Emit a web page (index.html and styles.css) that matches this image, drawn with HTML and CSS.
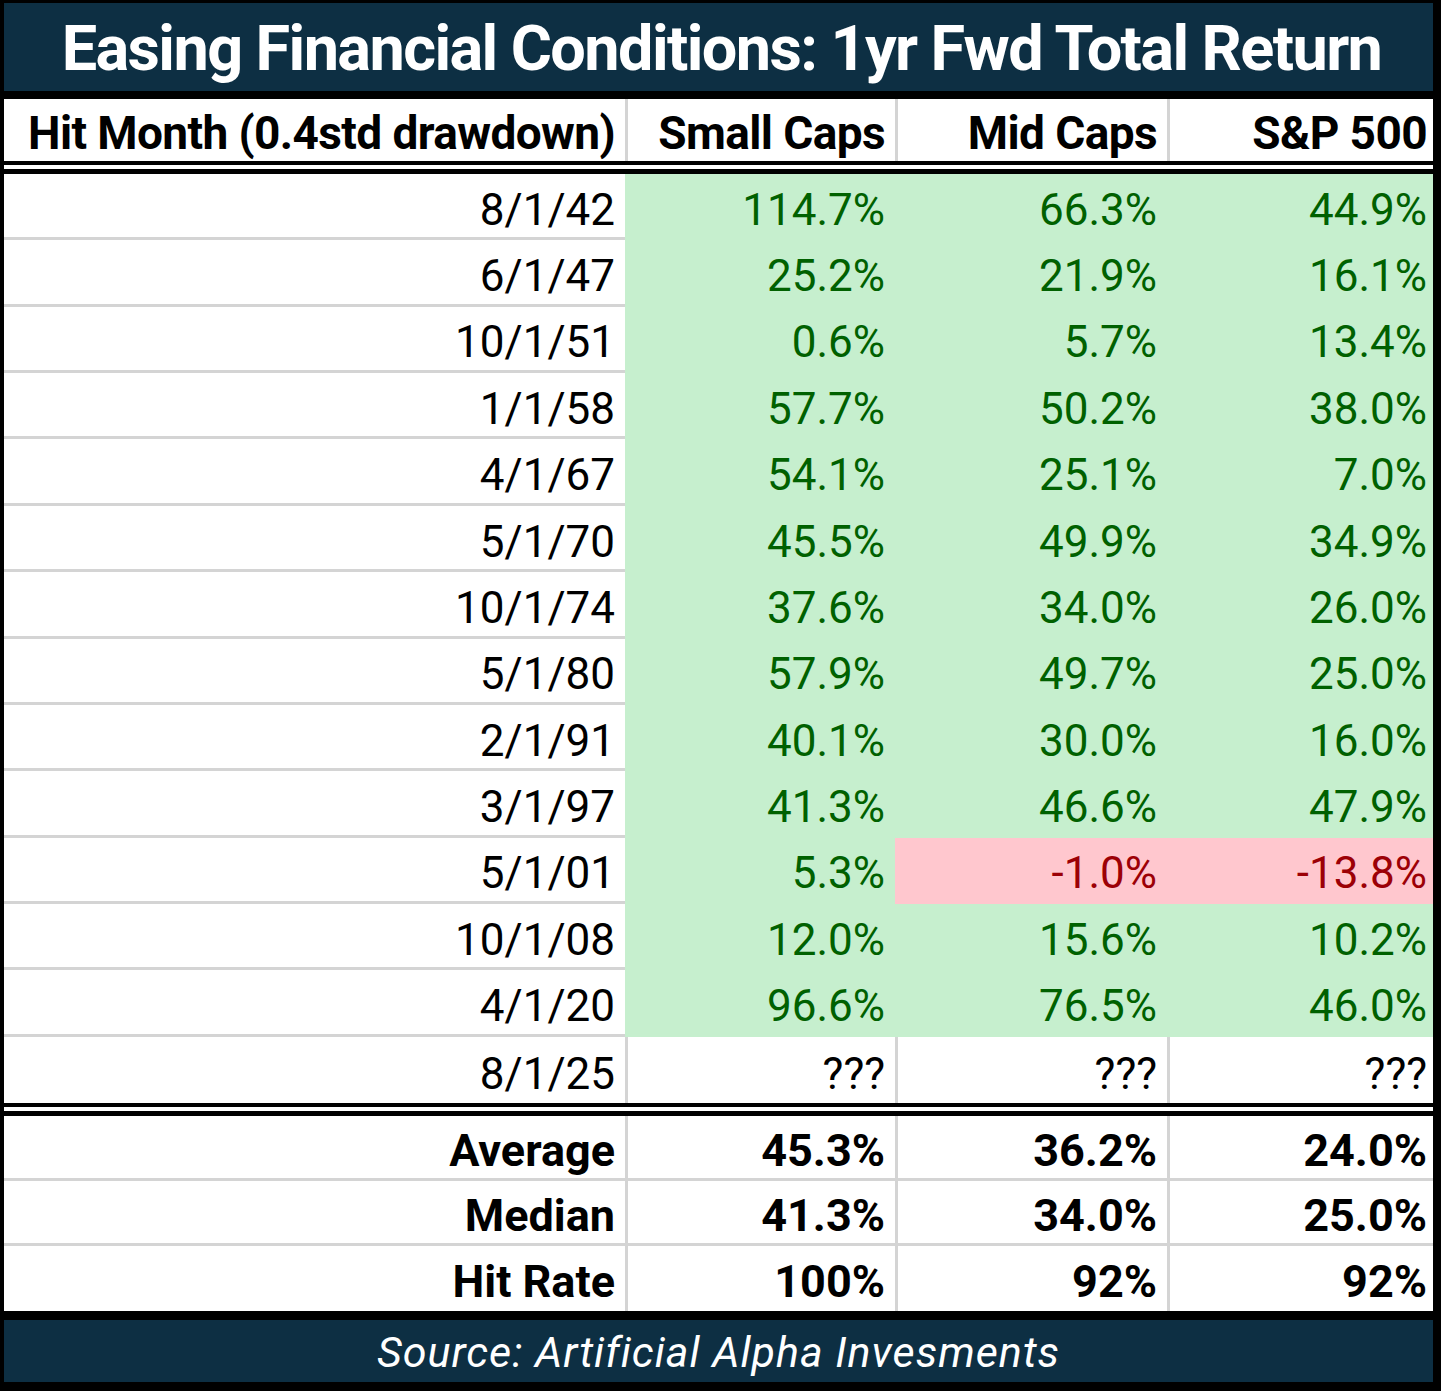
FILE: index.html
```html
<!DOCTYPE html>
<html lang="en">
<head>
<meta charset="utf-8">
<title>Easing Financial Conditions: 1yr Fwd Total Return</title>
<link rel="stylesheet" href="styles.css">
</head>
<body>
<div class="frame">
  <header class="title">Easing Financial Conditions: 1yr Fwd Total Return</header>

  <div class="row head">
    <div class="c c1">Hit Month (0.4std drawdown)</div>
    <div class="c c2">Small Caps</div>
    <div class="c c3">Mid Caps</div>
    <div class="c c4">S&amp;P 500</div>
  </div>
  <div class="dbl"></div>

  <div class="row data"><div class="c c1">8/1/42</div><div class="c c2 g">114.7%</div><div class="c c3 g">66.3%</div><div class="c c4 g">44.9%</div></div>
  <div class="row data"><div class="c c1">6/1/47</div><div class="c c2 g">25.2%</div><div class="c c3 g">21.9%</div><div class="c c4 g">16.1%</div></div>
  <div class="row data"><div class="c c1">10/1/51</div><div class="c c2 g">0.6%</div><div class="c c3 g">5.7%</div><div class="c c4 g">13.4%</div></div>
  <div class="row data"><div class="c c1">1/1/58</div><div class="c c2 g">57.7%</div><div class="c c3 g">50.2%</div><div class="c c4 g">38.0%</div></div>
  <div class="row data"><div class="c c1">4/1/67</div><div class="c c2 g">54.1%</div><div class="c c3 g">25.1%</div><div class="c c4 g">7.0%</div></div>
  <div class="row data"><div class="c c1">5/1/70</div><div class="c c2 g">45.5%</div><div class="c c3 g">49.9%</div><div class="c c4 g">34.9%</div></div>
  <div class="row data"><div class="c c1">10/1/74</div><div class="c c2 g">37.6%</div><div class="c c3 g">34.0%</div><div class="c c4 g">26.0%</div></div>
  <div class="row data"><div class="c c1">5/1/80</div><div class="c c2 g">57.9%</div><div class="c c3 g">49.7%</div><div class="c c4 g">25.0%</div></div>
  <div class="row data"><div class="c c1">2/1/91</div><div class="c c2 g">40.1%</div><div class="c c3 g">30.0%</div><div class="c c4 g">16.0%</div></div>
  <div class="row data"><div class="c c1">3/1/97</div><div class="c c2 g">41.3%</div><div class="c c3 g">46.6%</div><div class="c c4 g">47.9%</div></div>
  <div class="row data"><div class="c c1">5/1/01</div><div class="c c2 g">5.3%</div><div class="c c3 r">-1.0%</div><div class="c c4 r">-13.8%</div></div>
  <div class="row data"><div class="c c1">10/1/08</div><div class="c c2 g">12.0%</div><div class="c c3 g">15.6%</div><div class="c c4 g">10.2%</div></div>
  <div class="row data"><div class="c c1">4/1/20</div><div class="c c2 g">96.6%</div><div class="c c3 g">76.5%</div><div class="c c4 g">46.0%</div></div>
  <div class="row data last"><div class="c c1">8/1/25</div><div class="c c2">???</div><div class="c c3">???</div><div class="c c4">???</div></div>

  <div class="dbl dbl-b"></div>

  <div class="row sum"><div class="c c1">Average</div><div class="c c2">45.3%</div><div class="c c3">36.2%</div><div class="c c4">24.0%</div></div>
  <div class="row sum"><div class="c c1">Median</div><div class="c c2">41.3%</div><div class="c c3">34.0%</div><div class="c c4">25.0%</div></div>
  <div class="row sum end"><div class="c c1">Hit Rate</div><div class="c c2">100%</div><div class="c c3">92%</div><div class="c c4">92%</div></div>

  <footer class="source">Source: Artificial Alpha Invesments</footer>
</div>
</body>
</html>
```

FILE: styles.css
```css
* { box-sizing: border-box; }

html, body {
  margin: 0;
  padding: 0;
  background: #000;
}

.frame {
  width: 1441px;
  height: 1391px;
  background: #000;
  padding: 3px 8px 9px 4px;
  display: flex;
  flex-direction: column;
  font-family: Roboto, "Liberation Sans", sans-serif;
  color: #000;
}

.title {
  height: 88px;
  margin-bottom: 8px;
  background: #0d2f43;
  color: #fff;
  font-weight: 700;
  font-size: 63px;
  letter-spacing: -1.6px;
  display: flex;
  align-items: center;
  justify-content: center;
  padding-top: 4px;
  padding-left: 6px;
  white-space: nowrap;
}

.row {
  display: grid;
  grid-template-columns: 621px 270px 272px 266px;
  background: #fff;
}

.c {
  display: flex;
  align-items: center;
  justify-content: flex-end;
  padding-right: 10px;
  white-space: nowrap;
  line-height: 1;
}

.c2, .c3, .c4 { border-left: 3px solid #d4d4d4; }
.c4 { padding-right: 6px; }

/* header */
.head { height: 62px; }
.head .c {
  font-weight: 700;
  font-size: 46px;
  letter-spacing: -0.6px;
  padding-top: 6px;
}

/* double rules */
.dbl {
  height: 13px;
  background: #fff;
  border-top: 4px solid #000;
  border-bottom: 5px solid #000;
}

/* data rows */
.data { height: 66.4px; }
.data .c {
  font-size: 44px;
  padding-top: 8px;
  border-bottom: 3px solid #d4d4d4;
}
.data.last .c { border-bottom: 0; }
.data .c2, .data .c3, .data .c4 { border-bottom-color: transparent; }

.g {
  background: #c6efce;
  color: #006100;
  border-left-color: transparent !important;
}
.r {
  background: #ffc7ce;
  color: #9c0006;
  border-left-color: transparent !important;
}

/* summary rows */
.sum { height: 65px; }
.sum .c {
  font-size: 45px;
  font-weight: 700;
  padding-top: 6px;
  border-bottom: 3px solid #d4d4d4;
}
.sum.end .c { border-bottom: 0; }
.sum.end { margin-bottom: 9px; }

/* footer */
.source {
  height: 62px;
  background: #0d2f43;
  color: #fff;
  font-style: italic;
  font-size: 43px;
  letter-spacing: 1px;
  display: flex;
  align-items: center;
  justify-content: center;
  padding-top: 2px;
}
```
